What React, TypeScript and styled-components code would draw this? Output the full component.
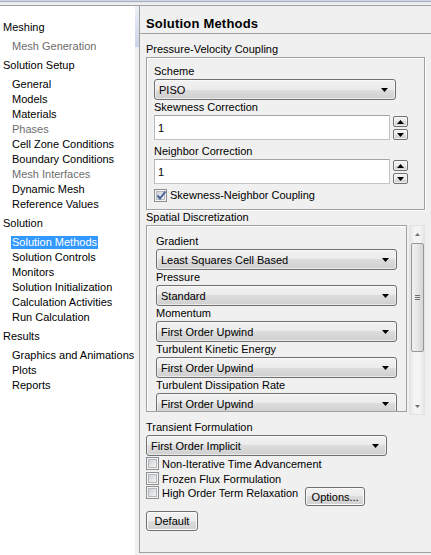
import React from "react";
import styled, { createGlobalStyle } from "styled-components";

const GlobalStyle = createGlobalStyle`
  html, body { margin: 0; padding: 0; }
  body {
    background: #f0f0f0;
    font-family: "Liberation Sans", Arial, sans-serif;
    font-size: 11px;
    color: #000;
  }
  * { box-sizing: border-box; }
`;

const Window = styled.div`
  width: 431px;
  height: 555px;
  overflow: hidden;
  display: flex;
  flex-direction: column;
  background: #f0f0f0;
`;

const TopEdge = styled.div`
  flex: none;
  height: 5px;
  background: linear-gradient(#cfd6e1 0 1px, #a9b1bd 1px 2px, #e4e8ee 2px 3px, #f0f0f0 3px);
`;

const Body = styled.div`
  flex: 1;
  min-height: 0;
  display: flex;
`;

/* ---------- left tree ---------- */

const Tree = styled.div`
  width: 135px;
  flex: none;
  background: #fff;
  border-top: 1px solid #a0a0a0;
  padding-top: 14px;
`;

const TreeGroup = styled.div`
  margin-bottom: 4px;
`;

const TreeHeader = styled.div`
  height: 15px;
  line-height: 15px;
  padding-left: 3px;
  margin-bottom: 4px;
  white-space: nowrap;
`;

const TreeItem = styled.div`
  height: 15px;
  display: flex;
  align-items: center;
  padding-left: 11px;
  white-space: nowrap;
`;

const TreeText = styled.span<{ $disabled?: boolean; $selected?: boolean }>`
  display: inline-block;
  height: 13px;
  line-height: 13px;
  padding: 0 1px;
  color: ${(p) => (p.$selected ? "#fff" : p.$disabled ? "#6d6d6d" : "#000")};
  background: ${(p) => (p.$selected ? "#3399ff" : "transparent")};
`;

const Splitter = styled.div`
  width: 4px;
  flex: none;
  background: #f0f0f0;
  border-top: 1px solid #a0a0a0;
`;

const SplitterThumb = styled.div`
  height: 41px;
  background: linear-gradient(#eef1f7, #c9d3e8);
`;

/* ---------- right panel ---------- */

const Panel = styled.div`
  flex: 1;
  align-self: flex-start;
  height: 548px;
  border-left: 1px solid #a0a0a0;
  border-top: 1px solid #a0a0a0;
  border-bottom: 1px solid #a0a0a0;
  display: flex;
  flex-direction: column;
`;

const PanelHeader = styled.div`
  height: 28px;
  padding: 10px 6px 0;
  line-height: 16px;
  font-size: 13px;
  font-weight: bold;
  letter-spacing: 0.2px;
  border-bottom: 1px solid #a0a0a0;
`;

const PanelContent = styled.div`
  padding: 8px 6px 0;
  display: flex;
  flex-direction: column;
  align-items: flex-start;
`;

const Label = styled.div<{ $mt?: number }>`
  height: 15px;
  line-height: 15px;
  margin-top: ${(p) => p.$mt ?? 0}px;
  white-space: nowrap;
`;

const GroupBox = styled.div`
  width: 279px;
  border: 1px solid #a0a0a0;
  box-shadow: inset 1px 1px 0 #fff, 1px 1px 0 #fff;
  padding: 6px 0 6px 7px;
  display: flex;
  flex-direction: column;
  align-items: flex-start;
`;

const ArrowSvg = ({ up, color = "#000" }: { up?: boolean; color?: string }) => (
  <svg width="7" height="4" viewBox="0 0 7 4">
    <polygon points={up ? "0,4 7,4 3.5,0" : "0,0 7,0 3.5,4"} fill={color} />
  </svg>
);

const SelectBox = styled.div<{ $w: number }>`
  width: ${(p) => p.$w}px;
  height: 21px;
  flex: none;
  border: 1px solid #707070;
  border-radius: 3px;
  background: linear-gradient(#f2f2f2 0%, #ebebeb 50%, #dddddd 50%, #cfcfcf 100%);
  box-shadow: inset 0 0 0 1px rgba(255, 255, 255, 0.55);
  display: flex;
  align-items: center;
  justify-content: space-between;
  padding: 0 7px 0 4px;
  white-space: nowrap;
`;

const Select = ({ value, w = 241 }: { value: string; w?: number }) => (
  <SelectBox $w={w}>
    <span>{value}</span>
    <ArrowSvg />
  </SelectBox>
);

const InputRow = styled.div`
  height: 25px;
  display: flex;
  align-items: flex-start;
  gap: 3px;
`;

const TextInput = styled.div`
  width: 236px;
  height: 25px;
  background: #fff;
  border: 1px solid #c2c4ca;
  border-top-color: #a3a5ab;
  border-left-color: #b6b8be;
  padding-left: 3px;
  display: flex;
  align-items: center;
`;

const Spinner = styled.div`
  display: flex;
  flex-direction: column;
  gap: 2px;
  padding-top: 1px;
`;

const SpinButton = styled.div`
  width: 15px;
  height: 11px;
  border: 1px solid #707070;
  border-radius: 2px;
  background: linear-gradient(#f2f2f2, #ebebeb 50%, #dddddd 50%, #cfcfcf);
  box-shadow: inset 0 0 0 1px rgba(255, 255, 255, 0.6);
  display: flex;
  align-items: center;
  justify-content: center;
`;

const CheckRow = styled.div<{ $h?: number; $mt?: number; $top?: boolean }>`
  height: ${(p) => p.$h ?? 15}px;
  margin-top: ${(p) => p.$mt ?? 0}px;
  display: flex;
  align-items: ${(p) => (p.$top ? "flex-start" : "center")};
  white-space: nowrap;
`;

const CheckBoxOuter = styled.span`
  position: relative;
  width: 13px;
  height: 13px;
  flex: none;
  border: 1px solid #8e8f8f;
  background: #f4f4f4;
  padding: 1px;
  margin-right: 3px;
`;

const CheckBoxInner = styled.span`
  display: block;
  width: 9px;
  height: 9px;
  border: 1px solid #b4b7bc;
  background: linear-gradient(135deg, #cdd1d6, #f4f4f4);
`;

const CheckMark = styled.svg`
  position: absolute;
  left: 1px;
  top: 0px;
`;

const CheckBox = ({ checked }: { checked?: boolean }) => (
  <CheckBoxOuter>
    <CheckBoxInner />
    {checked && (
      <CheckMark width="11" height="11" viewBox="0 0 11 11">
        <path d="M1.5 5.5 L4 8.5 L9.5 1.5" stroke="#4a5f97" strokeWidth="2" fill="none" />
      </CheckMark>
    )}
  </CheckBoxOuter>
);

const RowText = styled.span`
  line-height: 14px;
`;

const ScrollArea = styled.div`
  display: flex;
  gap: 2px;
  height: 190px;
  flex: none;
`;

const DiscBox = styled.div`
  width: 261px;
  height: 187px;
  border: 1px solid #a0a0a0;
  box-shadow: inset 1px 1px 0 #fff;
  padding: 8px 0 0 9px;
  overflow: hidden;
  display: flex;
  flex-direction: column;
  align-items: flex-start;
`;

const Scrollbar = styled.div`
  width: 16px;
  height: 190px;
  border: 1px solid #e3e3e3;
  background: linear-gradient(90deg, #e6e6e6, #f4f4f4 30%, #f4f4f4 70%, #e6e6e6);
  display: flex;
  flex-direction: column;
`;

const ScrollArrow = styled.div`
  height: 16px;
  flex: none;
  display: flex;
  align-items: center;
  justify-content: center;
`;

const ScrollTrack = styled.div`
  flex: 1;
  padding: 1px 0 0 1px;
`;

const ScrollThumb = styled.div`
  width: 13px;
  height: 109px;
  border: 1px solid #979797;
  border-radius: 2px;
  background: linear-gradient(90deg, #f1f1f1, #e6e6e6 50%, #d4d4d4);
  display: flex;
  flex-direction: column;
  align-items: center;
  justify-content: center;
  gap: 1px;
`;

const Grip = styled.span`
  width: 5px;
  height: 1px;
  background: #6f6f6f;
`;

const Button = styled.div<{ $w: number; $h?: number; $ml?: number; $mt?: number }>`
  width: ${(p) => p.$w}px;
  height: ${(p) => p.$h ?? 20}px;
  margin-left: ${(p) => p.$ml ?? 0}px;
  margin-top: ${(p) => p.$mt ?? 0}px;
  flex: none;
  border: 1px solid #707070;
  border-radius: 3px;
  background: linear-gradient(#f2f2f2, #ebebeb 50%, #dddddd 50%, #cfcfcf);
  box-shadow: inset 0 0 0 1px #fbfbfb;
  display: flex;
  align-items: center;
  justify-content: center;
`;

const tree = [
  { title: "Meshing", items: [{ t: "Mesh Generation", d: true }] },
  {
    title: "Solution Setup",
    items: [
      { t: "General" },
      { t: "Models" },
      { t: "Materials" },
      { t: "Phases", d: true },
      { t: "Cell Zone Conditions" },
      { t: "Boundary Conditions" },
      { t: "Mesh Interfaces", d: true },
      { t: "Dynamic Mesh" },
      { t: "Reference Values" },
    ],
  },
  {
    title: "Solution",
    items: [
      { t: "Solution Methods", s: true },
      { t: "Solution Controls" },
      { t: "Monitors" },
      { t: "Solution Initialization" },
      { t: "Calculation Activities" },
      { t: "Run Calculation" },
    ],
  },
  {
    title: "Results",
    items: [{ t: "Graphics and Animations" }, { t: "Plots" }, { t: "Reports" }],
  },
] as { title: string; items: { t: string; d?: boolean; s?: boolean }[] }[];

const disc = [
  ["Gradient", "Least Squares Cell Based"],
  ["Pressure", "Standard"],
  ["Momentum", "First Order Upwind"],
  ["Turbulent Kinetic Energy", "First Order Upwind"],
  ["Turbulent Dissipation Rate", "First Order Upwind"],
];

const SpinInput = ({ value }: { value: string }) => (
  <InputRow>
    <TextInput>{value}</TextInput>
    <Spinner>
      <SpinButton>
        <ArrowSvg up />
      </SpinButton>
      <SpinButton>
        <ArrowSvg />
      </SpinButton>
    </Spinner>
  </InputRow>
);

export default function App() {
  return (
    <>
      <GlobalStyle />
      <Window>
        <TopEdge />
        <Body>
          <Tree>
            {tree.map((g) => (
              <TreeGroup key={g.title}>
                <TreeHeader>{g.title}</TreeHeader>
                {g.items.map((it) => (
                  <TreeItem key={it.t}>
                    <TreeText $disabled={it.d} $selected={it.s}>
                      {it.t}
                    </TreeText>
                  </TreeItem>
                ))}
              </TreeGroup>
            ))}
          </Tree>
          <Splitter>
            <SplitterThumb />
          </Splitter>
          <Panel>
            <PanelHeader>Solution Methods</PanelHeader>
            <PanelContent>
              <Label>Pressure-Velocity Coupling</Label>
              <GroupBox>
                <Label>Scheme</Label>
                <Select value="PISO" w={242} />
                <Label>Skewness Correction</Label>
                <SpinInput value="1" />
                <Label $mt={4}>Neighbor Correction</Label>
                <SpinInput value="1" />
                <CheckRow $h={16} $mt={3}>
                  <CheckBox checked />
                  Skewness-Neighbor Coupling
                </CheckRow>
              </GroupBox>
              <Label>Spatial Discretization</Label>
              <ScrollArea>
                <DiscBox>
                  {disc.map(([l, v]) => (
                    <React.Fragment key={l}>
                      <Label>{l}</Label>
                      <Select value={v} />
                    </React.Fragment>
                  ))}
                </DiscBox>
                <Scrollbar>
                  <ScrollArrow>
                    <svg width="5" height="3" viewBox="0 0 5 3">
                      <polygon points="0,3 5,3 2.5,0" fill="#707070" />
                    </svg>
                  </ScrollArrow>
                  <ScrollTrack>
                    <ScrollThumb>
                      <Grip />
                      <Grip />
                      <Grip />
                    </ScrollThumb>
                  </ScrollTrack>
                  <ScrollArrow>
                    <svg width="5" height="3" viewBox="0 0 5 3">
                      <polygon points="0,0 5,0 2.5,3" fill="#707070" />
                    </svg>
                  </ScrollArrow>
                </Scrollbar>
              </ScrollArea>
              <Label $mt={5}>Transient Formulation</Label>
              <Select value="First Order Implicit" />
              <CheckRow>
                <CheckBox />
                Non-Iterative Time Advancement
              </CheckRow>
              <CheckRow>
                <CheckBox />
                Frozen Flux Formulation
              </CheckRow>
              <CheckRow $h={20} $top>
                <CheckBox />
                <RowText>High Order Term Relaxation</RowText>
                <Button $w={60} $h={19} $ml={7} $mt={1}>
                  Options...
                </Button>
              </CheckRow>
              <Button $w={52} $mt={5}>
                Default
              </Button>
            </PanelContent>
          </Panel>
        </Body>
      </Window>
    </>
  );
}
